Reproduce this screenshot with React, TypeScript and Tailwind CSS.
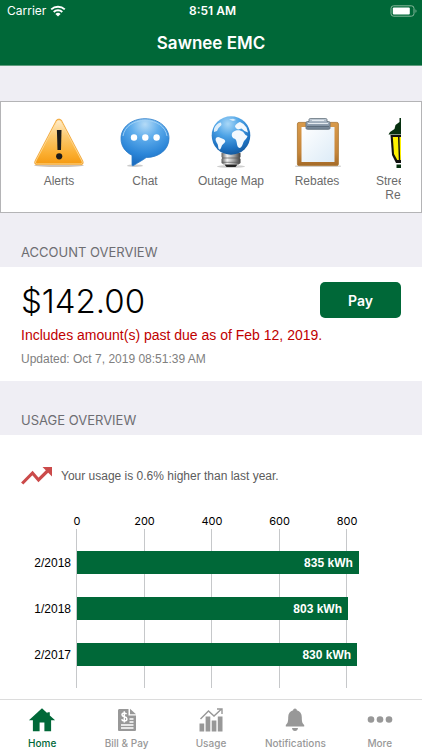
import React, { useState } from "react";

interface Shortcut {
  id: string;
  label: string;
  icon: React.ReactNode;
}

interface UsageRow {
  month: string;
  kwh: number;
}

interface Tab {
  id: string;
  label: string;
  icon: React.ReactNode;
}

const AXIS_MAX = 960;
const TICKS = [0, 200, 400, 600, 800];

const usage: UsageRow[] = [
  { month: "2/2018", kwh: 835 },
  { month: "1/2018", kwh: 803 },
  { month: "2/2017", kwh: 830 },
];

function AlertIcon() {
  return (
    <svg viewBox="0 0 54 50" className="h-[50px] w-[54px]" aria-hidden="true">
      <defs>
        <linearGradient id="alertFill" x1="0" y1="0" x2="0" y2="1">
          <stop offset="0" stopColor="#ffeccb" />
          <stop offset="0.35" stopColor="#fccb73" />
          <stop offset="0.75" stopColor="#fbaf32" />
          <stop offset="1" stopColor="#f59a12" />
        </linearGradient>
      </defs>
      <ellipse cx="27" cy="47.5" rx="25" ry="1.5" fill="#b9a894" opacity="0.7" />
      <path
        d="M23.8 2.6C25.2 0 28.6 0 30 2.6L51 42.5c1.3 2.6.2 4.500-2.400 4.500H5.200c-2.600 0-3.700-1.900-2.400-4.500Z"
        fill="#f2a73a"
      />
      <path
        d="M24.600 3.600c1-1.900 3.600-1.900 4.600 0L49.900 43c.8 1.700.1 2.900-1.700 2.900H5.600c-1.800 0-2.500-1.200-1.700-2.900Z"
        fill="url(#alertFill)"
        stroke="#ffe0a0"
        strokeWidth="0.8"
      />
      <path d="M24.900 12h4.600L29 32h-3.500Z" fill="#1b1b1b" />
      <circle cx="27.200" cy="38.300" r="3.100" fill="#1b1b1b" />
    </svg>
  );
}

function ChatIcon() {
  return (
    <svg viewBox="0 0 54 50" className="h-[50px] w-[54px]" aria-hidden="true">
      <defs>
        <radialGradient id="chatFill" cx="0.5" cy="0.12" r="0.85">
          <stop offset="0" stopColor="#b5dbf7" />
          <stop offset="0.35" stopColor="#5fadec" />
          <stop offset="0.75" stopColor="#2c86d8" />
          <stop offset="1" stopColor="#1b6cbf" />
        </radialGradient>
      </defs>
      <ellipse cx="17" cy="47.700" rx="8" ry="1.300" fill="#999" opacity="0.5" />
      <path
        d="M27 .7C40.500.7 51 9.200 51 20.200c0 11-9.500 19.300-22.800 19.300-2.600 2.200-8 5-12.600 8-1 .6-1.600.2-1.600-.8v-9.400C7 33.900 3 28 3 20.500 3 9.300 13.500.7 27 .7Z"
        fill="url(#chatFill)"
        stroke="#2a7bc8"
        strokeWidth="0.8"
      />
      <path d="M5 18C6.500 8.500 15.500 2.500 27 2.500S47.500 8.500 49 18" fill="none" stroke="#a5d3f5" strokeWidth="0.900" />
      <circle cx="16" cy="19.500" r="3.200" fill="#fff" />
      <circle cx="27.300" cy="19.500" r="3.200" fill="#fff" />
      <circle cx="38.600" cy="19.500" r="3.200" fill="#fff" />
    </svg>
  );
}

function OutageIcon() {
  return (
    <svg viewBox="0 0 54 50" className="h-[50px] w-[54px] overflow-visible" aria-hidden="true">
      <defs>
        <radialGradient id="globeFill" cx="0.42" cy="0.2" r="0.8">
          <stop offset="0" stopColor="#a9d8f8" />
          <stop offset="0.4" stopColor="#4da3e6" />
          <stop offset="0.8" stopColor="#1d72c2" />
          <stop offset="1" stopColor="#155a9f" />
        </radialGradient>
        <linearGradient id="bulbBase" x1="0" y1="0" x2="1" y2="0">
          <stop offset="0" stopColor="#5e5e5e" />
          <stop offset="0.3" stopColor="#f4f4f4" />
          <stop offset="0.65" stopColor="#a2a2a2" />
          <stop offset="1" stopColor="#3d3d3d" />
        </linearGradient>
      </defs>
      <ellipse cx="27" cy="48.500" rx="14" ry="1.400" fill="#888" opacity="0.4" />
      <path d="M17.500 35h19v4l-.8 1 .8 1v4l-2 1.500h-15l-2-1.500v-4l.8-1-.8-1Z" fill="url(#bulbBase)" />
      <path d="M18 40h18M18 44.300h18" stroke="#5a5a5a" strokeWidth="0.700" />
      <path d="M20.500 46.500h13l-2 2.500h-9Z" fill="#222" />
      <circle cx="27" cy="17.500" r="19.300" fill="url(#globeFill)" />
      <g fill="#f3f9fe">
        <path d="M10 11c1-3 3.500-6 7-6.500l.5 2.500-3 3-1.500 3-3 1Z" opacity="0.85" />
        <path d="M12.500 19.500c2-1.500 3.500.3 5 .8 1.500.6 3.500 1 3.700 2.700.2 2-2.700 3-3.500 5-.6 1.500-1 3.700-2.200 3.500-1.500-.3-1-3.500-2-5.500-1-2-3-4.500-1-6.500Z" />
        <path d="M28.500 14.500c2-2.200 4.500-2.500 7-2.300l3.500 1.500 2.500 3.300 2 1c-.5 2.500-3 4-4 6-.8 2-1.500 5-3.500 6-2 .3-3-2.500-3.200-5-.3-2-.6-3.500-2-4.300-2.500-.3-4-3.500-2.300-6.200Z" />
        <path d="M31 8.500c0-1.500 3-4 5-4.500l3.500 2 3 3.500 1.500 5-3.500-1.500-3-2.500-3.500 1-2-1.200Z" />
        <path d="m25 1.500 4-.8 3 1.200-3 1.200Z" opacity="0.8" />
      </g>
    </svg>
  );
}

function RebatesIcon() {
  return (
    <svg viewBox="0 0 54 50" className="h-[50px] w-[54px]" aria-hidden="true">
      <defs>
        <linearGradient id="boardFill" x1="0" y1="0" x2="0" y2="1">
          <stop offset="0" stopColor="#d99a4a" />
          <stop offset="0.7" stopColor="#c5853a" />
          <stop offset="1" stopColor="#a46a28" />
        </linearGradient>
        <linearGradient id="paperFill" x1="0" y1="0" x2="1" y2="1">
          <stop offset="0" stopColor="#ffffff" />
          <stop offset="1" stopColor="#dcebf7" />
        </linearGradient>
        <linearGradient id="clipFill" x1="0" y1="0" x2="0" y2="1">
          <stop offset="0" stopColor="#c7d1db" />
          <stop offset="0.5" stopColor="#93a2b1" />
          <stop offset="1" stopColor="#6f7f90" />
        </linearGradient>
      </defs>
      <rect x="5" y="47.500" width="46" height="1.500" rx="0.700" fill="#bbb" opacity="0.600" />
      <rect x="7.400" y="4.400" width="41" height="43.200" rx="1.600" fill="url(#boardFill)" stroke="#a8742e" strokeWidth="0.800" />
      <rect x="11.500" y="9" width="33" height="35" fill="url(#paperFill)" />
      <path
        d="M19 3.500V1.800C19 .8 19.700.4 20.800.4h14.400c1.100 0 1.800.4 1.800 1.400v1.700h1.500c1 0 1.500.6 1.500 1.500v4.900c0 1-.5 1.400-1.500 1.400h-21c-1 0-1.500-.4-1.500-1.400V5c0-.9.500-1.500 1.500-1.500Z"
        fill="url(#clipFill)"
        stroke="#66747f"
        strokeWidth="0.900"
      />
      <path d="M22 2.500h12M18 5.500h20" stroke="#e5ebf0" strokeWidth="1" />
      <path d="M17 8.600h22" stroke="#596878" strokeWidth="1" />
    </svg>
  );
}

function StreetLightIcon() {
  return (
    <svg viewBox="0 0 54 50" className="h-[50px] w-[54px]" aria-hidden="true">
      <path d="M27 0h-3.500v4L19.500 7l-1 4-4.500 3-1.500 2.500H43.500L42 14l-4.500-3-1-4-4-3V0Z" fill="#06300f" />
      <path d="M14.500 17h27l-1.500 20-4 8H20l-4-8Z" fill="#111" />
      <path d="M16.800 19h5.200l.8 23h-1.500l-3.300-6ZM39.200 19H34l-.8 23h1.500l3.300-6ZM23.500 19h9l-.7 23h-7.600Z" fill="#fff200" />
      <path d="M20.500 46.500h15V50h-15Z" fill="#06300f" />
    </svg>
  );
}

function HomeIcon() {
  return (
    <svg viewBox="0 0 28 24" className="h-6 w-7" fill="currentColor" aria-hidden="true">
      <path d="M14 .3.900 12.300h4V23.200h6.700v-8.700h4.800v8.700h6.700V12.300h4L21.800 7.500V4.200h-2.400v1.100Z" />
    </svg>
  );
}

function BillIcon() {
  return (
    <svg viewBox="0 0 28 24" className="h-6 w-7" aria-hidden="true">
      <path d="M6.500 1h9v6.500H23v14.200c0 .8-.5 1.300-1.300 1.300H6.300C5.500 23 5 22.500 5 21.700V2.500C5 1.600 5.600 1 6.500 1Z" fill="currentColor" />
      <path d="M17 .8 23 6.200h-6Z" fill="currentColor" />
      <path
        d="M13.600 6.200C13 5.300 12.200 5 11.200 5 9.900 5 9 5.600 9 6.800c0 2.700 4.900 1.300 4.900 4.100 0 1.300-1.100 2-2.500 2-1.200 0-2.200-.5-2.800-1.500M11.300 3.300v11.300"
        fill="none"
        stroke="#fff"
        strokeWidth="1.500"
      />
      <path d="M16.500 11h4M16.500 14h4M8 17h12.500M8 20h12.500" stroke="#fff" strokeWidth="1.400" />
    </svg>
  );
}

function UsageIcon() {
  return (
    <svg viewBox="0 0 28 24" className="h-6 w-7" aria-hidden="true">
      <path d="M2.500 15.500h4.700v8H2.500ZM8.600 8.500h4.700v15H8.600ZM14.700 12.500h4.700v11h-4.700ZM20.800 8.500h4.700v15h-4.700Z" fill="currentColor" />
      <path d="m3.500 11 8-8 5.500 5L24 1.500M20 1h5v5" fill="none" stroke="currentColor" strokeWidth="1.400" />
    </svg>
  );
}

function BellIcon() {
  return (
    <svg viewBox="0 0 28 24" className="h-6 w-7" fill="currentColor" aria-hidden="true">
      <path d="M14 .5c1.100 0 1.800.7 1.800 1.800 3.300.9 5 3.400 5 7 0 4.200.4 6 2.400 7.700V18.500H4.800V17c2-1.700 2.400-3.500 2.400-7.700 0-3.600 1.700-6.100 5-7C12.200 1.200 12.900.5 14 .5ZM11 20h6c-.2 1.800-1.300 3-3 3s-2.800-1.200-3-3Z" />
    </svg>
  );
}

function MoreIcon() {
  return (
    <svg viewBox="0 0 28 24" className="h-6 w-7" fill="currentColor" aria-hidden="true">
      <circle cx="5" cy="11.500" r="3.300" />
      <circle cx="14" cy="11.500" r="3.300" />
      <circle cx="23" cy="11.500" r="3.300" />
    </svg>
  );
}

function TrendIcon() {
  return (
    <svg viewBox="0 0 32 20" className="h-5 w-8 shrink-0" aria-hidden="true">
      <path d="M1.200 17.500 11.500 7l6 7L27 4.500" fill="none" stroke="#cb4a4a" strokeWidth="3.200" />
      <path d="M21.500 1H31v9.500Z" fill="#cb4a4a" />
    </svg>
  );
}

const shortcuts: Shortcut[] = [
  { id: "alerts", label: "Alerts", icon: <AlertIcon /> },
  { id: "chat", label: "Chat", icon: <ChatIcon /> },
  { id: "outage", label: "Outage Map", icon: <OutageIcon /> },
  { id: "rebates", label: "Rebates", icon: <RebatesIcon /> },
  { id: "street", label: "Streetlight Repair", icon: <StreetLightIcon /> },
];

const tabs: Tab[] = [
  { id: "home", label: "Home", icon: <HomeIcon /> },
  { id: "bill", label: "Bill & Pay", icon: <BillIcon /> },
  { id: "usage", label: "Usage", icon: <UsageIcon /> },
  { id: "notifications", label: "Notifications", icon: <BellIcon /> },
  { id: "more", label: "More", icon: <MoreIcon /> },
];

function StatusBar() {
  return (
    <div className="grid h-[22px] grid-cols-3 items-center pr-1 pl-[7px] leading-none">
      <div className="flex items-center gap-1">
        <span className="font-['Inter',sans-serif] text-[12px]">Carrier</span>
        <svg viewBox="0 0 16 12" className="h-3 w-4" aria-hidden="true">
          <path d="M1.200 4.400a10 10 0 0 1 13.600 0M3.700 7a6.300 6.300 0 0 1 8.600 0" fill="none" stroke="#fff" strokeWidth="1.900" />
          <path d="M8 11.600 5.400 8.900a3.800 3.800 0 0 1 5.200 0Z" fill="#fff" />
        </svg>
      </div>
      <span className="text-center font-['Inter',sans-serif] text-[12px] font-semibold">8:51 AM</span>
      <svg viewBox="0 0 28 12" className="h-3 w-7 justify-self-end" aria-hidden="true">
        <rect x="1" y="0.800" width="23" height="10.400" rx="2.600" fill="none" stroke="#86b79b" />
        <rect x="2.800" y="2.600" width="17" height="6.800" rx="1" fill="#fff" />
        <path d="M25.500 4.200c1.300.5 1.300 3.100 0 3.600Z" fill="#86b79b" />
      </svg>
    </div>
  );
}

function UsageChart() {
  return (
    <div className="mt-[26px] mr-[21px] ml-[77px]">
      <div className="relative h-[17px] font-['Inter',sans-serif] text-[11px] leading-[18px] text-black">
        {TICKS.map((tick) => (
          <span key={tick} className="absolute -translate-x-1/2" style={{ left: `${(tick / AXIS_MAX) * 100}%` }}>
            {tick}
          </span>
        ))}
      </div>
      <div className="relative flex flex-col gap-[23px] pt-[22px] pb-[22px]">
        {TICKS.map((tick) => (
          <span
            key={tick}
            className="absolute inset-y-0 w-px -translate-x-px bg-[#c6c8ca]"
            style={{ left: `${(tick / AXIS_MAX) * 100}%` }}
          />
        ))}
        {usage.map((row) => (
          <div key={row.month} className="relative -ml-[77px] flex items-center">
            <span className="w-[77px] shrink-0 pr-[6px] text-right text-[12px] text-black">{row.month}</span>
            <div className="flex-1">
              <div
                className="flex h-[23px] items-center justify-end bg-[#006838] pr-[6px] text-[12px] font-bold text-white"
                style={{ width: `${(row.kwh / AXIS_MAX) * 100}%` }}
              >
                {row.kwh} kWh
              </div>
            </div>
          </div>
        ))}
      </div>
    </div>
  );
}

export default function App() {
  const [activeTab, setActiveTab] = useState("home");

  return (
    <div className="flex min-h-screen flex-col bg-white font-['Liberation_Sans',Arial,sans-serif]">
      <header className="border-b border-[#5f9c7e] bg-[#006838] text-white">
        <StatusBar />
        <h1 className="flex h-[43px] items-center justify-center font-['Inter',sans-serif] text-[17px] font-semibold">
          Sawnee EMC
        </h1>
      </header>

      <main className="flex flex-1 flex-col">
        <section className="bg-[#efeef4] pt-[35px]">
          <div className="border border-[#b4b4b6] bg-white px-5">
            <div className="flex h-[110px] gap-[10px] overflow-hidden pt-4">
              {shortcuts.map((item) => (
                <button key={item.id} type="button" className="flex w-[76px] shrink-0 flex-col items-center gap-[6px]">
                  {item.icon}
                  <span className="text-[12px] leading-[14px] text-[#6b6b6b]">{item.label}</span>
                </button>
              ))}
            </div>
          </div>
        </section>

        <h2 className="bg-[#efeef4] px-[21px] pt-[30px] pb-[5px] font-['Inter',sans-serif] text-[13px] leading-[19px] text-[#6d6d72]">
          ACCOUNT OVERVIEW
        </h2>
        <section className="px-[21px] pt-[15px] pb-[13px]">
          <div className="flex items-start justify-between">
            <p className="font-['Inter',sans-serif] text-[33px] leading-[38px] font-light text-black">$142.00</p>
            <button type="button" className="h-9 w-[81px] rounded-[5px] bg-[#006838] font-['Inter',sans-serif] text-[14px] font-semibold text-white">
              Pay
            </button>
          </div>
          <p className="mt-1 text-[14px] leading-[22px] text-[#c00000]">Includes amount(s) past due as of Feb 12, 2019.</p>
          <p className="mt-1 text-[12px] leading-[18px] text-[#808080]">Updated: Oct 7, 2019 08:51:39 AM</p>
        </section>

        <h2 className="bg-[#efeef4] px-[21px] pt-[30px] pb-[5px] font-['Inter',sans-serif] text-[13px] leading-[19px] text-[#6d6d72]">
          USAGE OVERVIEW
        </h2>
        <section className="pt-[31px] pb-[11px]">
          <div className="flex items-center gap-2 px-[21px]">
            <TrendIcon />
            <p className="text-[12px] leading-5 text-[#5c5c5c]">Your usage is 0.6% higher than last year.</p>
          </div>
          <UsageChart />
        </section>
      </main>

      <nav className="sticky bottom-0 grid grid-cols-5 border-t border-[#dcdcdc] bg-white pt-2 font-['Inter',sans-serif]">
        {tabs.map((tab) => (
          <button
            key={tab.id}
            type="button"
            onClick={() => setActiveTab(tab.id)}
            className={`flex flex-col items-center gap-1 text-[10px] leading-[14px] font-medium ${
              tab.id === activeTab ? "text-[#006838]" : "text-[#989898]"
            }`}
          >
            {tab.icon}
            {tab.label}
          </button>
        ))}
      </nav>
    </div>
  );
}
